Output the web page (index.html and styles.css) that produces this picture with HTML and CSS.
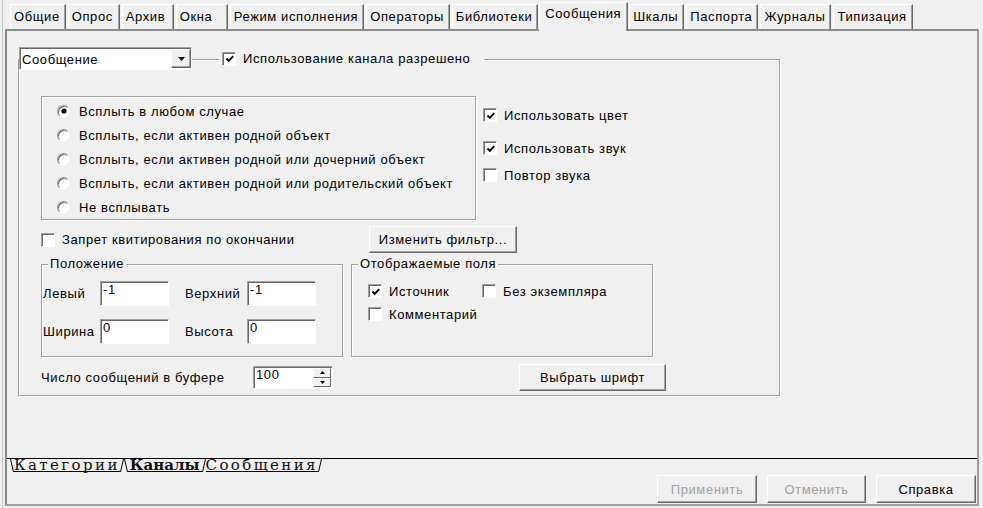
FILE: index.html
```html
<!DOCTYPE html>
<html lang="ru">
<head>
<meta charset="utf-8">
<title>Сообщения</title>
<link rel="stylesheet" href="styles.css">
</head>
<body>
<div class="window">
  <div class="tabs">
    <div class="tab">Общие</div>
    <div class="tab">Опрос</div>
    <div class="tab">Архив</div>
    <div class="tab">Окна</div>
    <div class="tab">Режим исполнения</div>
    <div class="tab">Операторы</div>
    <div class="tab">Библиотеки</div>
    <div class="tab active">Сообщения</div>
    <div class="tab">Шкалы</div>
    <div class="tab">Паспорта</div>
    <div class="tab">Журналы</div>
    <div class="tab">Типизация</div>
  </div>
  <div class="frame">
    <div class="page">
      <div class="chgroup">
        <div class="chhead">
          <div class="combo">
            <span class="combo-text">Сообщение</span>
            <span class="combo-btn"><svg width="7" height="4" viewBox="0 0 7 4"><path d="M0 0H7L3.5 4Z" fill="#000"/></svg></span>
          </div>
          <div class="cb hdrcb"><span class="box"><svg class="tick" width="10" height="10" viewBox="0 0 10 10"><path d="M1.5 4.5L3.8 6.8L8.2 2.2" fill="none" stroke="#000" stroke-width="1.9"/></svg></span><span>Использование канала разрешено</span></div>
        </div>

        <div class="row-a">
          <div class="radios">
            <div class="radio"><span class="rbtn sel"></span>Всплыть в любом случае</div>
            <div class="radio"><span class="rbtn"></span>Всплыть, если активен родной объект</div>
            <div class="radio"><span class="rbtn"></span>Всплыть, если активен родной или дочерний объект</div>
            <div class="radio"><span class="rbtn"></span>Всплыть, если активен родной или родительский объект</div>
            <div class="radio"><span class="rbtn"></span>Не всплывать</div>
          </div>
          <div class="rchecks">
            <div class="cb rc1"><span class="box"><svg class="tick" width="10" height="10" viewBox="0 0 10 10"><path d="M1.5 4.5L3.8 6.8L8.2 2.2" fill="none" stroke="#000" stroke-width="1.9"/></svg></span><span>Использовать цвет</span></div>
            <div class="cb rc2"><span class="box"><svg class="tick" width="10" height="10" viewBox="0 0 10 10"><path d="M1.5 4.5L3.8 6.8L8.2 2.2" fill="none" stroke="#000" stroke-width="1.9"/></svg></span><span>Использовать звук</span></div>
            <div class="cb rc3"><span class="box"></span><span>Повтор звука</span></div>
          </div>
        </div>

        <div class="row-b">
          <div class="cb zapret"><span class="box"></span><span>Запрет квитирования по окончании</span></div>
          <div class="btn filter-btn">Изменить фильтр...</div>
        </div>

        <div class="row-c">
          <div class="group pos">
            <div class="gcap">Положение</div>
            <div class="prow first">
              <span class="plabel">Левый</span><span class="edit">-1</span>
              <span class="plabel second">Верхний</span><span class="edit">-1</span>
            </div>
            <div class="prow">
              <span class="plabel">Ширина</span><span class="edit">0</span>
              <span class="plabel second">Высота</span><span class="edit">0</span>
            </div>
          </div>
          <div class="group fields">
            <div class="gcap">Отображаемые поля</div>
            <div class="frow first">
              <div class="cb fitem"><span class="box"><svg class="tick" width="10" height="10" viewBox="0 0 10 10"><path d="M1.5 4.5L3.8 6.8L8.2 2.2" fill="none" stroke="#000" stroke-width="1.9"/></svg></span><span>Источник</span></div>
              <div class="cb"><span class="box"></span><span>Без экземпляра</span></div>
            </div>
            <div class="frow">
              <div class="cb fitem"><span class="box"></span><span>Комментарий</span></div>
            </div>
          </div>
        </div>

        <div class="row-d">
          <span class="buflabel">Число сообщений в буфере</span>
          <div class="spin">
            <span class="spin-text">100</span>
            <span class="spin-btns">
              <span class="sbtn"><svg width="5" height="3" viewBox="0 0 5 3"><path d="M0 3H5L2.5 0Z" fill="#000"/></svg></span>
              <span class="sbtn"><svg width="5" height="3" viewBox="0 0 5 3"><path d="M0 0H5L2.5 3Z" fill="#000"/></svg></span>
            </span>
          </div>
          <div class="btn font-btn">Выбрать шрифт</div>
        </div>
      </div>
    </div>

    <div class="btabs">
      <span class="bt">
        <svg class="sl" width="4" height="13" viewBox="0 0 4 13"><path d="M0.5 0L3.5 13" stroke="#000" fill="none"/></svg>
        <span class="btx">Категории</span>
        <svg class="sl" width="4" height="13" viewBox="0 0 4 13"><path d="M0.5 13L3.5 0" stroke="#000" fill="none"/></svg>
      </span>
      <span class="bt cur">
        <svg class="sl" width="4" height="13" viewBox="0 0 4 13"><path d="M0.5 0L3.5 13" stroke="#000" fill="none"/></svg>
        <span class="btx">Каналы</span>
        <svg class="sl" width="4" height="13" viewBox="0 0 4 13"><path d="M0.5 13L3.5 0" stroke="#000" fill="none"/></svg>
      </span>
      <span class="bt">
        <span class="btx">Сообщения</span>
        <svg class="sl" width="4" height="13" viewBox="0 0 4 13"><path d="M0.5 13L3.5 0" stroke="#000" fill="none"/></svg>
      </span>
    </div>

    <div class="btns">
      <div class="btn dbtn disabled">Применить</div>
      <div class="btn dbtn cancel disabled">Отменить</div>
      <div class="btn dbtn">Справка</div>
    </div>
  </div>
</div>
</body>
</html>
```

FILE: styles.css
```css
* { box-sizing: border-box; }

body {
  margin: 0;
  background: #f0f0f0;
  font: 13px "Liberation Sans", Arial, sans-serif;
  letter-spacing: 0.6px;
  color: #000;
}

.window {
  width: 981px;
  height: 508px;
  margin-left: 2px;
  border-left: 1px solid #c4c4c4;
  overflow: hidden;
}

/* ---------- top tabs ---------- */
.tabs {
  display: flex;
  align-items: flex-end;
  height: 29px;
  padding-left: 7px;
  gap: 2px;
}

.tab {
  height: 25px;
  min-width: 52px;
  padding: 0 5px 0 3px;
  line-height: 23px;
  border-top: 1px solid #fff;
  border-left: 1px solid #fff;
  border-right: 1px solid #696969;
  box-shadow: inset -1px 0 0 #a0a0a0;
  white-space: nowrap;
}

.tab.active {
  height: 29px;
  margin: 0 -1px -2px -1px;
  padding: 0 6px 0 5px;
  line-height: 22px;
  background: #f0f0f0;
  position: relative;
  z-index: 1;
}

/* ---------- frame ---------- */
.frame {
  margin-left: 2px;
  width: 974px;
  height: 477px;
  border: 2px solid #a0a0a0;
  border-top-color: #8a8a8a;
  border-left-color: #8a8a8a;
  display: flex;
  flex-direction: column;
}

.page {
  height: 427px;
  padding: 28px 0 0 11px;
}

/* etched box */
.chgroup,
.radios,
.group {
  border: 1px solid #a0a0a0;
  box-shadow: 1px 1px 0 #fff, inset 1px 1px 0 #fff;
}

.chgroup {
  width: 762px;
  height: 337px;
  display: flex;
  flex-direction: column;
}

.chhead {
  display: flex;
  align-items: center;
  height: 23px;
  margin-top: -13px;
}

/* combo */
.combo {
  width: 173px;
  height: 23px;
  background: #fff;
  border: 1px solid;
  border-color: #a0a0a0 #fff #fff #a0a0a0;
  box-shadow: inset 1px 1px 0 #696969;
  display: flex;
  align-items: center;
  padding: 1px 0 0 2px;
}

.combo-btn {
  margin-left: auto;
  width: 20px;
  height: 19px;
  margin-top: -1px;
  background: #f0f0f0;
  border: 1px solid;
  border-color: #fff #696969 #696969 #fff;
  box-shadow: inset -1px -1px 0 #a0a0a0;
  display: flex;
  align-items: center;
  justify-content: center;
}

/* checkbox */
.cb {
  display: flex;
  align-items: center;
  gap: 7px;
  white-space: nowrap;
}

.box {
  width: 14px;
  height: 14px;
  flex: none;
  background: #fff;
  border: 1px solid;
  border-color: #a0a0a0 #fff #fff #a0a0a0;
  box-shadow: inset 1px 1px 0 #696969;
  display: flex;
  align-items: center;
  justify-content: center;
  padding: 1px 0 0 1px;
}

.hdrcb {
  margin-left: 27px;
  padding: 0 14px 0 3px;
  height: 20px;
  background: #f0f0f0;
}

/* row A */
.row-a {
  display: flex;
  margin-top: 26px;
}

.radios {
  margin-left: 22px;
  width: 435px;
  height: 124px;
  padding: 2px 0 0 15px;
}

.radio {
  display: flex;
  align-items: center;
  gap: 9px;
  height: 24px;
  white-space: nowrap;
}

.rbtn {
  width: 13px;
  height: 13px;
  flex: none;
  border-radius: 50%;
  background: #fff;
  border: 1px solid;
  border-color: #a0a0a0 #fff #fff #a0a0a0;
  box-shadow: inset 1px 1px 0 #696969, 0 0 0 0.5px #e0e0e0;
  display: flex;
  align-items: center;
  justify-content: center;
}

.rbtn.sel::after {
  content: "";
  width: 4px;
  height: 4px;
  border-radius: 50%;
  background: #000;
  box-shadow: 0 0 0 0.6px #000;
}

.rchecks {
  margin-left: 7px;
  display: flex;
  flex-direction: column;
}

.rchecks .cb { height: 14px; }

.rc1 { margin-top: 12px; }
.rc2 { margin-top: 19px; }
.rc3 { margin-top: 13px; }

/* row B */
.row-b {
  display: flex;
  align-items: center;
  height: 27px;
  margin: 6px 0 0 22px;
}

.zapret { width: 328px; }

/* buttons */
.btn {
  display: flex;
  align-items: center;
  justify-content: center;
  background: #f0f0f0;
  border: 1px solid;
  border-color: #fff #696969 #696969 #fff;
  box-shadow: inset -1px -1px 0 #a0a0a0;
  white-space: nowrap;
}

.filter-btn {
  width: 148px;
  height: 27px;
}

/* row C */
.row-c {
  display: flex;
  gap: 8px;
  height: 93px;
  margin: 11px 0 0 22px;
}

.group {
  width: 302px;
  display: flex;
  flex-direction: column;
}

.gcap {
  align-self: flex-start;
  margin: -8px 0 0 6px;
  padding: 0 2px;
  line-height: 14px;
  background: #f0f0f0;
}

.prow {
  display: flex;
  align-items: center;
  height: 25px;
  margin-top: 13px;
  padding-left: 1px;
}

.prow.first { margin-top: 10px; }

.plabel { width: 57px; }
.plabel.second { width: 62px; margin-left: 16px; }

.edit {
  width: 69px;
  height: 25px;
  background: #fff;
  border: 1px solid;
  border-color: #a0a0a0 #fff #fff #a0a0a0;
  box-shadow: inset 1px 1px 0 #696969;
  padding: 1px 0 0 2px;
  line-height: 14px;
}

.frow {
  display: flex;
  height: 14px;
  margin-top: 9px;
  padding-left: 16px;
}

.frow.first { margin-top: 13px; }

.fitem { width: 114px; }

/* row D */
.row-d {
  display: flex;
  align-items: center;
  height: 27px;
  margin: 7px 0 0 22px;
}

.buflabel { width: 212px; }

.spin {
  width: 80px;
  height: 23px;
  display: flex;
  background: #fff;
  border: 1px solid;
  border-color: #a0a0a0 #fff #fff #a0a0a0;
  box-shadow: inset 1px 1px 0 #696969;
  padding: 1px 1px 1px 2px;
  line-height: 14px;
}

.spin-btns {
  margin-left: auto;
  width: 18px;
  display: flex;
  flex-direction: column;
}

.sbtn {
  flex: 1;
  background: #f0f0f0;
  border: 1px solid;
  border-color: #fff #696969 #696969 #fff;
  display: flex;
  align-items: center;
  justify-content: center;
}

.font-btn {
  width: 147px;
  height: 27px;
  margin-left: 186px;
}

/* ---------- bottom tab set ---------- */
.btabs {
  display: flex;
  height: 14px;
  border-top: 1px solid #000;
  padding-left: 3px;
  font-family: "DejaVu Serif", "Liberation Serif", serif;
  font-size: 15px;
  letter-spacing: 0;
}

.bt {
  display: flex;
  align-items: flex-start;
  height: 13px;
}

.sl { display: block; flex: none; }

.btx {
  height: 13px;
  line-height: 12px;
  border-bottom: 1px solid #000;
  letter-spacing: 2.4px;
  color: #111;
}

.bt.cur .btx {
  font-weight: bold;
  letter-spacing: 0;
  padding: 0 2px;
}

/* ---------- dialog buttons ---------- */
.btns {
  display: flex;
  justify-content: flex-end;
  gap: 10px;
  margin-top: 3px;
  padding-right: 1px;
}

.dbtn {
  width: 100px;
  height: 28px;
}

.dbtn.cancel { width: 99px; }

.disabled { color: #a0a0a0; }
```
